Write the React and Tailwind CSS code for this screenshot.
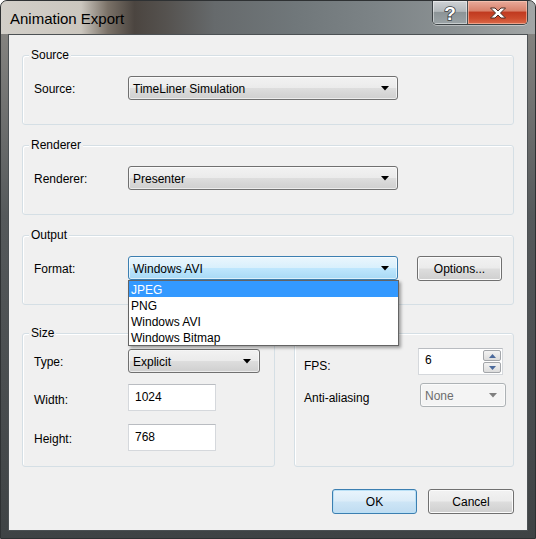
import React from "react";

const btnFace =
  "bg-[linear-gradient(to_bottom,#f2f2f2_0%,#ebebeb_48%,#dddddd_52%,#cfcfcf_100%)]";

function Arrow({ color = "#000" }) {
  return (
    <svg width="8" height="5" viewBox="0 0 8 5" className="shrink-0">
      <polygon points="0,0 8,0 4,4.5" fill={color} />
    </svg>
  );
}

function Combo({ value, w, focused, disabled, h = "h-[24px]" }) {
  let look = `border-[#707070] ${btnFace} text-black`;
  if (focused)
    look =
      "border-[#3c7fb1] bg-[linear-gradient(to_bottom,#eaf6fd_0%,#d9f0fc_48%,#bee6fd_52%,#a7d9f5_100%)] text-black";
  if (disabled) look = "border-[#adb2b5] bg-[#f4f4f4] text-[#6d6d6d]";
  return (
    <div
      className={`${w} ${h} ${look} flex items-center justify-between rounded-[3px] border pl-[4px] pr-[8px] shadow-[inset_0_0_0_1px_rgba(255,255,255,0.6)]`}
    >
      <span className="pt-[1px] leading-none">{value}</span>
      <Arrow color={disabled ? "#7f7f7f" : "#000"} />
    </div>
  );
}

function Button({ children, w, primary }) {
  const look = primary
    ? "border-[#3c7fb1] bg-[linear-gradient(to_bottom,#e9f4fc_0%,#dbecf8_48%,#cde5f6_52%,#bfdcf1_100%)] shadow-[inset_0_0_0_1px_#b9e0f6]"
    : `border-[#707070] ${btnFace} shadow-[inset_0_0_0_1px_#fbfbfb]`;
  return (
    <div
      className={`${w} h-[25px] ${look} flex items-center justify-center rounded-[3px] border pt-[1px]`}
    >
      {children}
    </div>
  );
}

function TextBox({ value }) {
  return (
    <div className="w-[88px] h-[27px] border border-[#d5d8dc] border-t-[#b9bcc1] bg-white pl-[6px] pt-[5px] leading-[14px]">
      {value}
    </div>
  );
}

function GroupBox({ label, className = "", children }) {
  return (
    <div
      className={`relative rounded-[3px] border border-[#d5dfe5] shadow-[inset_1px_1px_0_#ffffff] ${className}`}
    >
      {label && (
        <span className="absolute left-[6px] -top-[8px] bg-[#f0f0f0] px-[2px] leading-[14px]">
          {label}
        </span>
      )}
      {children}
    </div>
  );
}

function SpinBox({ value }) {
  const half =
    "flex-1 flex items-center justify-center rounded-[2px] border border-[#a3a6aa] bg-[linear-gradient(to_bottom,#f3f3f3,#dcdcdc)]";
  return (
    <div className="w-[85px] h-[27px] flex border border-[#d5d8dc] border-t-[#b9bcc1] bg-white">
      <div className="flex-1 pl-[6px] pt-[4px] leading-[14px]">{value}</div>
      <div className="w-[20px] flex flex-col gap-[1px] p-[1px]">
        <div className={half}>
          <svg width="7" height="4" viewBox="0 0 7 4">
            <polygon points="0,4 7,4 3.5,0" fill="#4c6a9c" />
          </svg>
        </div>
        <div className={half}>
          <svg width="7" height="4" viewBox="0 0 7 4">
            <polygon points="0,0 7,0 3.5,4" fill="#4c6a9c" />
          </svg>
        </div>
      </div>
    </div>
  );
}

const formats = ["JPEG", "PNG", "Windows AVI", "Windows Bitmap"];

export default function App() {
  return (
    <div className="w-[536px] h-[539px] flex flex-col overflow-hidden rounded-t-[7px] border border-[#2e3133] bg-[linear-gradient(to_bottom,#8c8a86,#55595b_40%,#3f4345)] text-[12px] text-black font-['Liberation_Sans',Arial,sans-serif]">
      {/* title bar */}
      <div className="h-[33px] shrink-0 flex items-start justify-between pr-[7px] bg-[linear-gradient(to_right,#d2cfc9_0%,#cbc6be_15%,#7a7167_20%,#4b4540_25%,#55524f_31%,#666a6c_40%,#70777a_55%,#7c8386_70%,#8b9193_85%,#a2a6a6_100%)]">
        <div className="pl-[9px] pt-[9px] text-[15px] leading-[18px] text-black">
          Animation Export
        </div>
        <div className="flex h-[24px] overflow-hidden rounded-b-[5px] border border-t-0 border-[#3d4346] shadow-[0_1px_0_rgba(255,255,255,0.4)]">
          <div className="w-[35px] flex items-center justify-center border-r border-[#4a5154] bg-[linear-gradient(to_bottom,#d0d3d5_0%,#b2b8bb_45%,#8c9497_50%,#9ba3a6_100%)] shadow-[inset_0_0_0_1px_rgba(255,255,255,0.45)]">
            <svg width="14" height="20" viewBox="0 0 14 20">
              <text
                x="7"
                y="17"
                textAnchor="middle"
                fontSize="19"
                fontWeight="bold"
                fontFamily="Liberation Sans, Arial, sans-serif"
                fill="#ffffff"
                stroke="#3c4043"
                strokeWidth="1.6"
                paintOrder="stroke"
              >
                ?
              </text>
            </svg>
          </div>
          <div className="w-[59px] flex items-center justify-center bg-[linear-gradient(to_bottom,#e9ab9b_0%,#d9826c_42%,#c13a20_50%,#cc4a2c_75%,#dc6a4a_100%)] shadow-[inset_0_0_0_1px_rgba(255,210,190,0.55)]">
            <svg width="18" height="12" viewBox="0 0 18 12">
              <path
                d="M1.5 1 H6 L9 4 L12 1 H16.5 L11.5 6 L16.5 11 H12 L9 8 L6 11 H1.5 L6.5 6 Z"
                fill="#ffffff"
                stroke="#4a2c25"
                strokeWidth="1"
                strokeLinejoin="round"
              />
            </svg>
          </div>
        </div>
      </div>

      {/* client area */}
      <div className="mx-[7px] mb-[7px] flex-1 flex flex-col border border-[#4c5154] bg-[#f0f0f0] px-[13px] pt-[20px]">
        <GroupBox label="Source" className="h-[70px] shrink-0">
          <div className="flex items-center pl-[11px] pt-[20px]">
            <div className="w-[94px] pt-[2px]">Source:</div>
            <Combo value="TimeLiner Simulation" w="w-[270px]" />
          </div>
        </GroupBox>

        <GroupBox label="Renderer" className="mt-[20px] h-[70px] shrink-0">
          <div className="flex items-center pl-[11px] pt-[20px]">
            <div className="w-[94px] pt-[2px]">Renderer:</div>
            <Combo value="Presenter" w="w-[270px]" />
          </div>
        </GroupBox>

        <GroupBox label="Output" className="mt-[20px] h-[70px] shrink-0 z-10">
          <div className="flex items-start pl-[11px] pt-[20px]">
            <div className="w-[94px] h-[24px] pt-[2px] flex items-center">Format:</div>
            <div className="relative">
              <Combo value="Windows AVI" w="w-[270px]" focused />
              <div className="absolute left-0 top-full w-[271px] border border-[#646464] bg-white shadow-[2px_2px_3px_rgba(0,0,0,0.35)]">
                {formats.map((f, i) => (
                  <div
                    key={f}
                    className={`h-[16px] pl-[2px] pt-[1px] leading-[16px] ${
                      i === 0 ? "bg-[#3399ff] text-white" : "text-black"
                    }`}
                  >
                    {f}
                  </div>
                ))}
              </div>
            </div>
            <div className="ml-[19px]">
              <Button w="w-[85px]">Options...</Button>
            </div>
          </div>
        </GroupBox>

        <div className="mt-[28px] h-[134px] shrink-0 flex gap-[19px]">
          <GroupBox label="Size" className="w-[253px] h-full">
            <div className="pl-[11px] pt-[15px]">
              <div className="flex items-center h-[24px]">
                <div className="w-[94px] pt-[2px]">Type:</div>
                <Combo value="Explicit" w="w-[132px]" />
              </div>
              <div className="mt-[11px] flex items-center h-[27px]">
                <div className="w-[94px] pt-[4px]">Width:</div>
                <TextBox value="1024" />
              </div>
              <div className="mt-[13px] flex items-center h-[27px]">
                <div className="w-[94px] pt-[3px]">Height:</div>
                <TextBox value="768" />
              </div>
            </div>
          </GroupBox>

          <GroupBox className="flex-1 h-full">
            <div className="pl-[9px] pt-[14px]">
              <div className="flex items-center h-[27px]">
                <div className="w-[114px] pt-[8px]">FPS:</div>
                <SpinBox value="6" />
              </div>
              <div className="mt-[8px] flex items-center h-[24px]">
                <div className="w-[116px] pt-[6px]">Anti-aliasing</div>
                <Combo value="None" w="w-[86px]" disabled />
              </div>
            </div>
          </GroupBox>
        </div>

        <div className="mt-[22px] flex justify-end gap-[11px]">
          <Button w="w-[85px]" primary>
            OK
          </Button>
          <Button w="w-[86px]">Cancel</Button>
        </div>
      </div>
    </div>
  );
}
